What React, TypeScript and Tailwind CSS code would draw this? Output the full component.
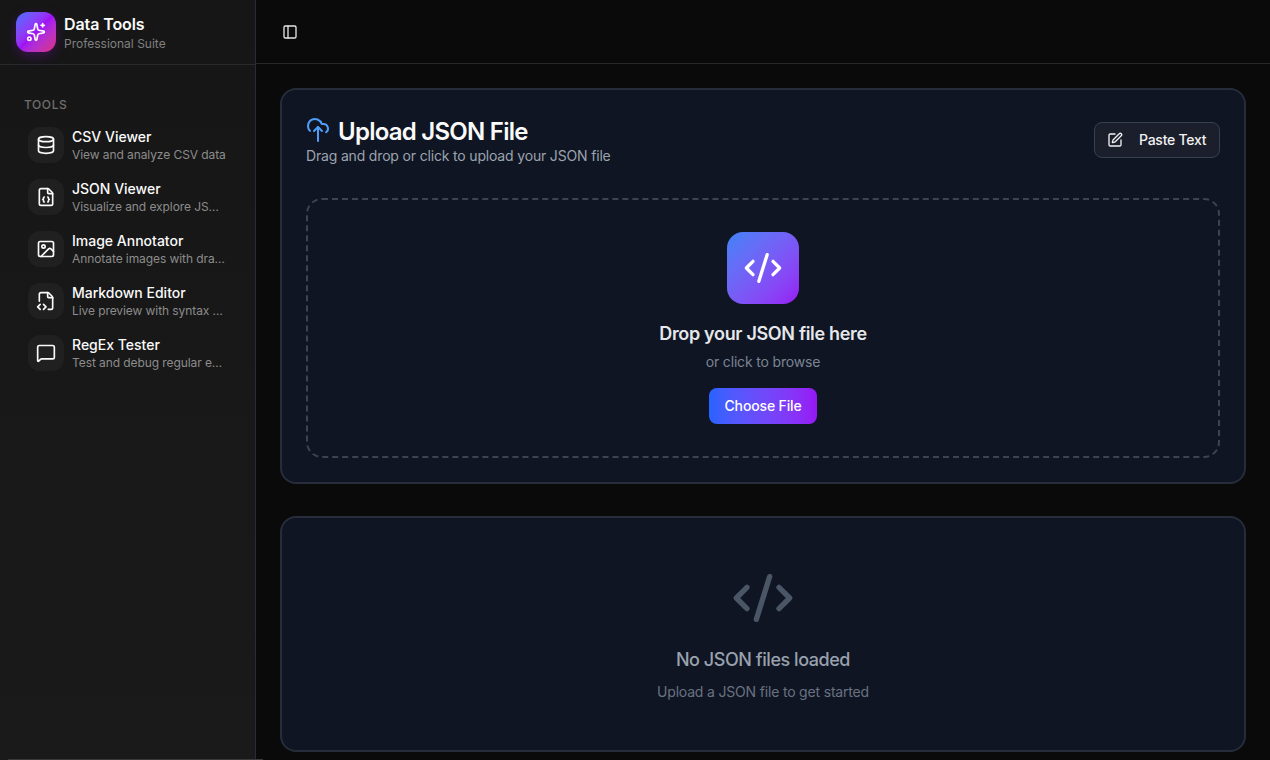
import { CodeXml, Database, FileCode2, FileJson, Image, MessageSquare, PanelLeft, Sparkles, SquarePen } from "lucide-react";

const tools = [
  { icon: Database, name: "CSV Viewer", desc: "View and analyze CSV data" },
  { icon: FileJson, name: "JSON Viewer", desc: "Visualize and explore JSON data" },
  { icon: Image, name: "Image Annotator", desc: "Annotate images with drawing tools" },
  { icon: FileCode2, name: "Markdown Editor", desc: "Live preview with syntax highlighting" },
  { icon: MessageSquare, name: "RegEx Tester", desc: "Test and debug regular expressions" },
];

// cloud with the long arrow stem, taller than lucide's CloudUpload
const UploadCloud = () => (
  <svg viewBox="0 0 24 28" fill="none" stroke="currentColor" strokeWidth="2" strokeLinecap="round" strokeLinejoin="round" className="w-6 h-7 text-[#4f9cf9]">
    <path d="M12 11v14" />
    <path d="M4 14.899A7 7 0 1 1 15.71 8h1.79a4.5 4.5 0 0 1 2.5 8.242" />
    <path d="m8 15 4-4 4 4" />
  </svg>
);

const Sidebar = () => (
  <aside className="w-[256px] shrink-0 h-full bg-gradient-to-b from-[#161616] to-[#1a1a1a] border-r border-[#2a2a3e] flex flex-col">
    <div className="h-[65px] shrink-0 border-b border-[#2a2a2e] px-4 flex items-center gap-2 pb-[1px]">
      <div className="w-10 h-10 rounded-xl bg-gradient-to-br from-[#3b6cff] via-[#a010f5] to-[#e0267f] flex items-center justify-center shadow-[0_4px_12px_rgba(160,16,245,0.25)]">
        <Sparkles className="w-5 h-5 text-white" />
      </div>
      <div>
        <div className="text-base leading-6 font-semibold tracking-[-0.1px] text-[#fafafa]">Data Tools</div>
        <div className="text-xs leading-4 text-[#808080]">Professional Suite</div>
      </div>
    </div>
    <div className="px-2 pt-[25px]">
      <div className="px-4 h-8 flex items-center text-xs font-medium tracking-wider text-[#6f6f6f] mt-[-1px]">TOOLS</div>
      <div className="flex flex-col gap-1 px-5">
        {tools.map((t) => (
          <div key={t.name} className="flex items-center gap-2 h-12">
            <div className="w-9 h-9 shrink-0 rounded-xl bg-[#202020] flex items-center justify-center">
              <t.icon className="w-5 h-5 text-[#fafafa]" />
            </div>
            <div className="min-w-0 flex-1">
              <div className="text-sm leading-5 font-medium text-[#fafafa] truncate">{t.name}</div>
              <div className="text-xs leading-4 tracking-[-0.08px] text-[#8c8c8c] truncate">{t.desc}</div>
            </div>
          </div>
        ))}
      </div>
    </div>
  </aside>
);

export default function App() {
  return (
    <div className="relative h-[760px] w-full overflow-hidden flex bg-[#0a0a0a] font-['Inter',sans-serif]">
      <Sidebar />
      <div className="flex-1 min-w-0 flex flex-col">
        <header className="h-[64px] shrink-0 border-b border-[#26272b] flex items-center px-[26px]">
          <PanelLeft className="w-4 h-4 text-[#e5e5e5]" />
        </header>
        <main className="px-6 pt-6 flex flex-col gap-8">
          <section className="h-[396px] rounded-2xl border-2 border-[#262c3a] bg-[#0f1522] px-6 pt-6">
            <div className="flex items-start justify-between">
              <div>
                <div className="flex items-center gap-2 h-8">
                  <UploadCloud />
                  <h2 className="text-2xl leading-8 font-semibold tracking-[-0.75px] mt-[3px] text-[#fafafa]">Upload JSON File</h2>
                </div>
                <p className="text-sm leading-5 tracking-[-0.17px] text-[#9ca3af]">Drag and drop or click to upload your JSON file</p>
              </div>
              <button className="mt-[8px] h-9 w-[126px] rounded-lg border border-[#3a3f4c] bg-[#1b1f2c] flex items-center pl-3 text-sm font-medium tracking-[-0.25px] whitespace-nowrap text-[#f2f2f2]">
                <SquarePen className="w-4 h-4 mr-4" />
                Paste Text
              </button>
            </div>
            <div className="mt-[32px] h-[260px] rounded-2xl border-2 border-dashed border-[#3c4454] flex flex-col items-center pt-[32px]">
              <div className="w-[72px] h-[72px] rounded-2xl bg-gradient-to-br from-[#3b82f6] to-[#9616f5] flex items-center justify-center">
                <CodeXml className="w-10 h-10 text-white" />
              </div>
              <h3 className="mt-4 text-lg leading-7 font-semibold tracking-[-0.33px] text-[#e5e7eb]">Drop your JSON file here</h3>
              <p className="mt-1 text-sm leading-5 tracking-[-0.17px] text-[#7b8494]">or click to browse</p>
              <button className="mt-4 h-9 w-[108px] rounded-lg bg-gradient-to-r from-[#2563ff] to-[#9616f5] text-sm font-medium tracking-[-0.15px] text-white">Choose File</button>
            </div>
          </section>
          <section className="h-[236px] rounded-2xl border-2 border-[#262c3a] bg-[#0f1522] flex flex-col items-center pt-[48px]">
            <CodeXml className="w-16 h-16 text-[#4a5565]" />
            <h3 className="mt-4 text-lg leading-7 font-medium tracking-[-0.45px] text-[#99a1af]">No JSON files loaded</h3>
            <p className="mt-[8px] text-sm leading-5 tracking-[-0.18px] text-[#6a7282]">Upload a JSON file to get started</p>
          </section>
        </main>
      </div>
      <div className="absolute left-2 bottom-0 w-[255px] h-px bg-[#3a3a3a]" />
    </div>
  );
}
